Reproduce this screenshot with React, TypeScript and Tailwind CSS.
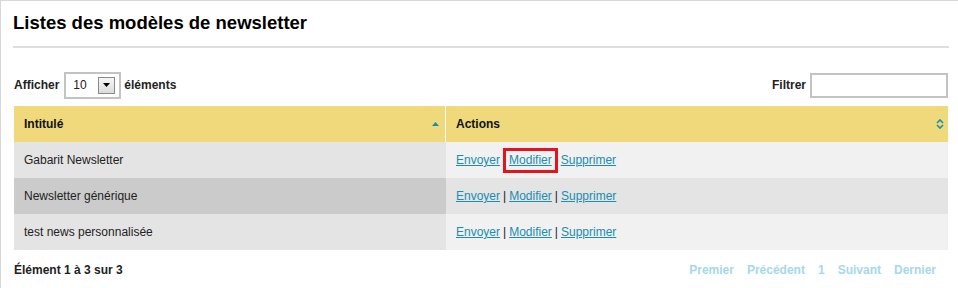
const rows = [
  { name: 'Gabarit Newsletter', highlight: true },
  { name: 'Newsletter générique', highlight: false },
  { name: 'test news personnalisée', highlight: false },
]

function SortAsc() {
  return (
    <svg width="7" height="4" viewBox="0 0 7 4">
      <path d="M3.5 0 L7 4 L0 4 Z" fill="#1590b3" />
    </svg>
  )
}

function SortBoth() {
  return (
    <svg width="8" height="10" viewBox="0 0 8 10">
      <path d="M1 4 L4 1 L7 4 M1 6 L4 9 L7 6" fill="none" stroke="#1590b3" strokeWidth="1.6" />
    </svg>
  )
}

function Actions({ highlight }: { highlight: boolean }) {
  return (
    <div className="flex items-center">
      <a className="underline text-[#1a8db0] cursor-pointer">Envoyer</a>
      {highlight ? (
        <span className="mx-[3px] px-[3px] border-[3px] border-[#e3141d] leading-[19px]">
          <a className="underline text-[#1a8db0] cursor-pointer">Modifier</a>
        </span>
      ) : (
        <>
          <span className="px-[3px]">|</span>
          <a className="underline text-[#1a8db0] cursor-pointer">Modifier</a>
          <span className="px-[3px]">|</span>
        </>
      )}
      <a className="underline text-[#1a8db0] cursor-pointer">Supprimer</a>
    </div>
  )
}

export default function App() {
  return (
    <div
      className="w-[958px] h-[288px] bg-white border-t border-l border-[#d8d8d8] text-[12px] text-[#222]"
      style={{ fontFamily: '"Liberation Sans", Arial, sans-serif' }}
    >
      <div className="pl-[12px] pr-[9px]">
        <h1 className="pt-[11px] pb-[13px] text-[18.5px] leading-[21px] font-bold text-black">
          Listes des modèles de newsletter
        </h1>
        <div className="h-[2px] bg-[#dedede]" />
      </div>

      <div className="pl-[13px] pr-[10px]">
        <div className="mt-[24px] flex items-center justify-between h-[26px]">
          <div className="flex items-center font-bold text-[#222]">
            <span>Afficher</span>
            <div className="ml-[5px] w-[57px] h-[27px] border-2 border-[#c3c3c3] flex items-center pl-[7px] pr-[4px] justify-between font-normal">
              <span>10</span>
              <div className="w-[17px] h-[17px] border border-[#8a8a8a] bg-gradient-to-b from-[#f6f6f6] to-[#dcdcdc] flex items-center justify-center">
                <svg width="7" height="4" viewBox="0 0 7 4">
                  <path d="M0 0 L7 0 L3.5 4 Z" fill="#000" />
                </svg>
              </div>
            </div>
            <span className="ml-[3px]">éléments</span>
          </div>
          <div className="flex items-center font-bold">
            <span>Filtrer</span>
            <input className="ml-[4px] w-[138px] h-[25px] border-2 border-[#c3c3c3] outline-none" />
          </div>
        </div>

        <div className="mt-[8px]">
          <div className="grid grid-cols-[431px_1px_502px] h-[36px] bg-[#efd97a] font-bold text-[#111]">
            <div className="flex items-center justify-between pl-[10px] pr-[6px]">
              <span>Intitulé</span>
              <SortAsc />
            </div>
            <div className="bg-white" />
            <div className="flex items-center justify-between pl-[10px] pr-[4px]">
              <span>Actions</span>
              <SortBoth />
            </div>
          </div>
          {rows.map((r, i) => (
            <div key={r.name} className="grid grid-cols-[432px_502px] h-[36px]">
              <div className={`flex items-center pl-[10px] ${i === 1 ? 'bg-[#cbcbcb]' : 'bg-[#e4e4e4]'}`}>
                {r.name}
              </div>
              <div className={`flex items-center pl-[10px] ${i === 1 ? 'bg-[#e4e4e4]' : 'bg-[#f1f1f1]'}`}>
                <Actions highlight={r.highlight} />
              </div>
            </div>
          ))}
        </div>

        <div className="mt-[11px] flex items-center justify-between font-bold">
          <span className="text-[#222]">Élément 1 à 3 sur 3</span>
          <div className="flex items-center gap-[13px] pr-[12px] text-[#a5d8ea]">
            <span>Premier</span>
            <span>Précédent</span>
            <span>1</span>
            <span>Suivant</span>
            <span>Dernier</span>
          </div>
        </div>
      </div>
    </div>
  )
}
